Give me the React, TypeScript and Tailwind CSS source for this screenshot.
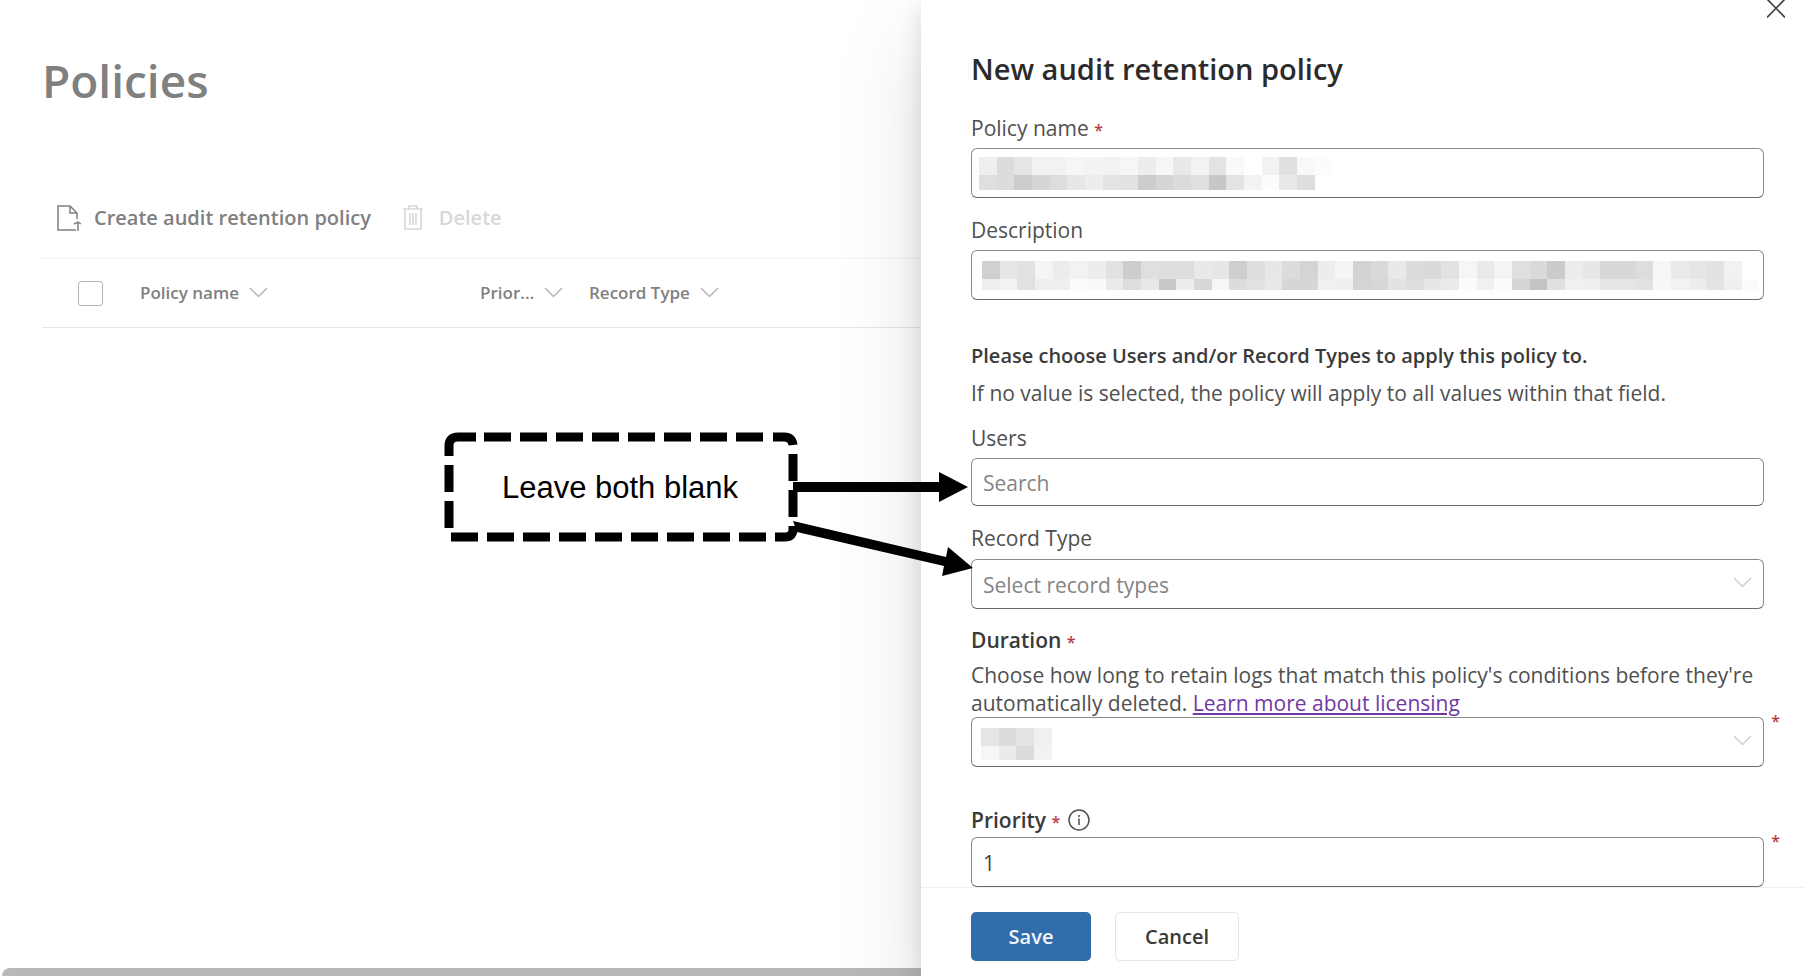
import React from "react";

const FIELD =
  "block w-full rounded-[6px] border border-[#8a8a8a] border-b-[#6a6a6a] bg-white px-[11px] pt-[2px] text-[21px] placeholder:text-[#848484] placeholder:opacity-100 outline-none";

function Mosaic({ rows, heights, className }: { rows: string[]; heights: number[]; className: string }) {
  const cell = 53 / 3;
  const width = Math.round(Math.max(...rows.map((r) => r.split(" ").length)) * cell);
  let y = 0;
  return (
    <svg aria-hidden="true" className={className} width={width} height={heights.reduce((a, b) => a + b, 0)} shapeRendering="crispEdges">
      {rows.map((row, r) => {
        const top = y;
        y += heights[r];
        return row
          .split(" ")
          .map((c, i) => (
            <rect key={r + "-" + i} x={Math.round(i * cell)} y={top} width={18} height={heights[r]} fill={"#" + c + c + c} />
          ));
      })}
    </svg>
  );
}

function Chevron({ className }: { className: string }) {
  return (
    <svg aria-hidden="true" className={className} width="19" height="12" viewBox="0 0 19 12" fill="none" stroke="currentColor" strokeWidth="1.5">
      <path d="M1 1l8.500 8.500L18 1" />
    </svg>
  );
}

function Star({ className = "" }: { className?: string }) {
  return <span className={"text-base font-semibold text-[#b93a3f] " + className}>*</span>;
}

function Callout() {
  return (
    <div className="pointer-events-none absolute top-[432px] -left-[477px] z-20 h-[150px] w-[530px]">
      <svg aria-hidden="true" className="absolute inset-0" width="530" height="150" viewBox="444 432 530 150">
        <rect x="449" y="437" width="344" height="100" rx="6" fill="#fff" />
        <g fill="none" stroke="#000" strokeWidth="9">
          <path d="M449 456V446Q449 437 458 437H476" />
          <path d="M484 437H765" strokeDasharray="27 9" />
          <path d="M773 437H784Q792 437 793 445" />
          <path d="M793 454V517" strokeDasharray="27 9" />
          <path d="M793 526V529Q793 537 785 537H775" />
          <path d="M451 537H767" strokeDasharray="27 9" />
          <path d="M449 465V528" strokeDasharray="27 9" />
        </g>
        <path d="M793 482H939V472L968 487L939 502V492H793Z" />
        <path d="M793 521L946 557L948 547L973 568L942 576L944 566L797 532Z" />
      </svg>
      <p className="relative flex h-[112px] w-[352px] items-center justify-center font-['Liberation_Sans',sans-serif] text-[31px] text-black">
        Leave both blank
      </p>
    </div>
  );
}

function Policies() {
  return (
    <main className="relative flex min-w-0 flex-1 flex-col pt-12 pl-[42px] text-[#808080]">
      <h1 className="text-[46px] leading-[64px] font-semibold">Policies</h1>
      <div className="mt-[92px] flex items-center text-xl leading-7 font-semibold">
        <button type="button" className="flex items-center pl-[14px]">
          <svg aria-hidden="true" width="26" height="28" viewBox="0 0 26 28" fill="none" stroke="currentColor" strokeWidth="1.5">
            <path d="M20 26H2V2h12l7 7v6M14 2v7h7M22 27V18M18 20l4-2 3 2" />
          </svg>
          <span className="ml-3">Create audit retention policy</span>
        </button>
        <button type="button" disabled className="ml-8 flex items-center text-[#d8d8d8]">
          <svg aria-hidden="true" width="20" height="26" viewBox="0 0 20 26" fill="none" stroke="currentColor" strokeWidth="1.6">
            <path d="M0 4h20M6 4V1h8v3M2 4v20h16V4M7 8v12M10 8v12M13 8v12" />
          </svg>
          <span className="ml-4">Delete</span>
        </button>
      </div>
      <table className="mt-[26px] w-full table-fixed border-t border-b border-t-[#f2f2f2] border-b-[#e6e6e6] text-left text-[17px] leading-6">
        <thead>
          <tr className="h-[69px]">
            <th className="w-[98px] pl-9">
              <input type="checkbox" aria-label="Select all policies" className="block size-[25px] appearance-none rounded-[3px] border border-[#b4b4b4] bg-white" />
            </th>
            <th className="w-[340px] font-semibold">
              <span className="flex items-center gap-[10px]">Policy name <Chevron className="text-[#b5b5b5]" /></span>
            </th>
            <th className="w-[109px] font-semibold">
              <span className="flex items-center gap-[10px]">Prior... <Chevron className="text-[#b5b5b5]" /></span>
            </th>
            <th className="font-semibold">
              <span className="flex items-center gap-[10px]">Record Type <Chevron className="text-[#b5b5b5]" /></span>
            </th>
          </tr>
        </thead>
      </table>
      <div aria-hidden="true" className="absolute right-0 bottom-0 left-[2px] h-2 rounded-tl-lg bg-[#b8b8b8]" />
    </main>
  );
}

function PolicyPanel() {
  return (
    <aside className="relative flex w-[884px] shrink-0 flex-col bg-white text-[21px] leading-7 text-[#505050] shadow-[0_38px_86px_rgba(0,0,0,0.13),0_7px_22px_rgba(0,0,0,0.12)]">
      <Callout />
      <button type="button" aria-label="Close" className="absolute top-0 right-5 h-[18px] w-[18px] overflow-hidden text-[#444]">
        <svg aria-hidden="true" width="18" height="18" viewBox="0 0 18 18" stroke="currentColor" strokeWidth="1.7">
          <path d="M0-1L18 17.500M18-1L0 17.500" />
        </svg>
      </button>
      <form className="relative z-10 flex flex-1 flex-col pt-[49px] pr-[41px] pl-[50px]">
        <h2 className="text-[29px] leading-10 font-semibold text-[#2b2b2b]">New audit retention policy</h2>

        <label htmlFor="name" className="mt-[25px]">Policy name <Star /></label>
        <div className="relative mt-[6px]">
          <input id="name" className={FIELD + " h-[50px]"} />
          <Mosaic
            className="pointer-events-none absolute top-[9px] left-2"
            heights={[18, 15]}
            rows={[
              "ef dc e5 f2 f2 f6 f3 f2 f6 ed f6 e8 f2 e3 f9 ff f2 e0 f9 fc",
              "df dc cd d6 dd e7 ed e3 e2 cd d5 db e0 c7 e3 f3 fc e9 de",
            ]}
          />
        </div>

        <label htmlFor="description" className="mt-[18px]">Description</label>
        <div className="relative mt-[6px]">
          <input id="description" className={FIELD + " h-[50px]"} />
          <Mosaic
            className="pointer-events-none absolute top-[11px] left-[11px]"
            heights={[18, 11]}
            rows={[
              "d0 e6 e2 f5 ec f2 ed e2 cd df dd dd e9 e6 ce de e7 dc d4 ed f5 d2 d9 e9 dc da e2 f6 ea f4 df d9 cb ec e7 d7 d8 dd f6 ea e6 e2 f2",
              "ee f3 e1 ee ef fb f9 ea dd e8 c8 ed d7 f6 dc e2 e8 d6 d6 f0 ef d4 d7 e2 dd e7 ea fc f1 fc d6 c4 e0 f0 ef e6 e6 e2 f8 f2 ed e4 ef fb",
            ]}
          />
        </div>

        <p className="mt-[42px] text-xl leading-7 font-semibold text-[#3a3a3a]">Please choose Users and/or Record Types to apply this policy to.</p>
        <p className="mt-[9px]">If no value is selected, the policy will apply to all values within that field.</p>

        <label htmlFor="users" className="mt-[17px]">Users</label>
        <input id="users" placeholder="Search" className={FIELD + " mt-[6px] h-12"} />

        <label htmlFor="record" className="mt-[18px]">Record Type</label>
        <div className="relative mt-[7px]">
          <select id="record" defaultValue="" className={FIELD + " h-[50px] appearance-none text-[#848484]"}>
            <option value="">Select record types</option>
          </select>
          <Chevron className="pointer-events-none absolute top-[18px] right-3 text-[#cfcfcf]" />
        </div>

        <label htmlFor="duration" className="mt-[17px] font-semibold text-[#3a3a3a]">Duration <Star /></label>
        <p className="mt-[7px]">
          Choose how long to retain logs that match this policy's conditions before they're automatically deleted.{" "}
          <a href="#licensing" className="text-[#7239a5] underline">Learn more about licensing</a>
        </p>
        <div className="relative">
          <select id="duration" className={FIELD + " h-[50px] appearance-none"}>
            <option value="" />
          </select>
          <Mosaic className="pointer-events-none absolute top-[11px] left-[10px]" heights={[18, 14]} rows={["e5 dc e4 f0", "f6 eb db f2"]} />
          <Chevron className="pointer-events-none absolute top-[18px] right-3 text-[#cfcfcf]" />
          <Star className="absolute -top-2 -right-4" />
        </div>

        <div className="mt-[39px] flex items-center">
          <label htmlFor="priority" className="font-semibold text-[#3a3a3a]">Priority <Star /></label>
          <svg role="img" aria-label="Priority information" className="ml-2" width="22" height="22" viewBox="0 0 22 22" fill="none" stroke="#505050" strokeWidth="1.5">
            <circle cx="11" cy="11" r="10" />
            <path d="M11 9.500V16M11 6v2" />
          </svg>
        </div>
        <div className="relative mt-[3px]">
          <input id="priority" defaultValue="1" className={FIELD + " h-[50px] text-[#444]"} />
          <Star className="absolute -top-2 -right-4" />
        </div>
      </form>
      <footer className="flex h-[89px] items-start gap-6 border-t border-[#f0f0f0] pt-6 pl-[50px] text-xl font-semibold">
        <button type="button" className="h-[49px] w-[120px] rounded-[5px] bg-[#316cab] text-[#f2f6fb]">Save</button>
        <button type="button" className="h-[49px] w-[124px] rounded-[5px] border border-[#e4e4e4] bg-white text-[#3a3a3a]">Cancel</button>
      </footer>
    </aside>
  );
}

export default function App() {
  return (
    <div className="flex min-h-screen overflow-hidden bg-white font-['Open_Sans','Noto_Sans',sans-serif]">
      <Policies />
      <PolicyPanel />
    </div>
  );
}
